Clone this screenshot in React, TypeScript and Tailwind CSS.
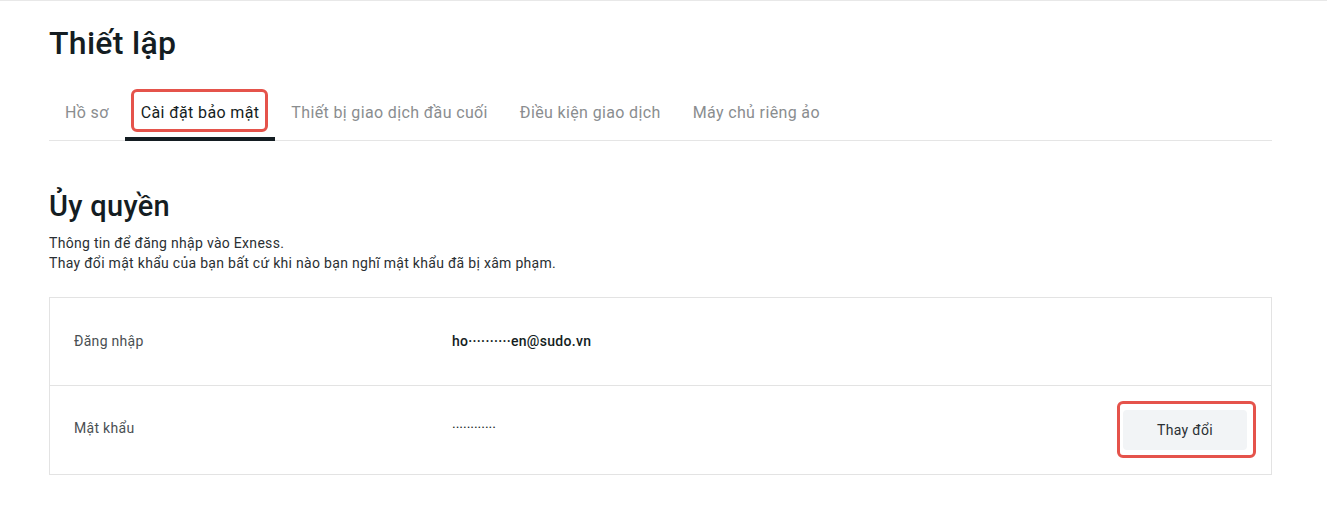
import { ReactNode } from "react";

const tabs = [
  "Hồ sơ",
  "Cài đặt bảo mật",
  "Thiết bị giao dịch đầu cuối",
  "Điều kiện giao dịch",
  "Máy chủ riêng ảo",
];

// red outline drawn over a highlighted control
const Marker = ({ children, className }: { children: ReactNode; className: string }) => (
  <span className="relative inline-flex">
    {children}
    <span
      className={`pointer-events-none absolute rounded-[6px] border-[3px] border-[#e5534b] ${className}`}
    />
  </span>
);

const App = () => {
  const active = 1;

  return (
    <div
      className="min-h-[511px] border-t border-[#e8e8e8] bg-white pl-[49px] pr-[55px] tracking-[0.3px] text-[#141d22]"
      style={{ fontFamily: "Roboto, 'Noto Sans', sans-serif" }}
    >
      <h1 className="mt-[22px] text-[32px] font-medium leading-[40px]">Thiết lập</h1>

      <div className="mt-[38px] flex border-b border-[#e5e5e5]">
        {tabs.map((tab, i) => {
          const isActive = i === active;
          return (
            <div
              key={tab}
              className={`relative px-[16px] pb-[15px] text-[16px] leading-[24px] tracking-[0.36px] ${
                isActive ? "text-[#141d22]" : "text-[#8a8d8f]"
              }`}
            >
              {isActive ? (
                <Marker className="-left-[10px] -right-[9px] -top-[12px] -bottom-[7px]">{tab}</Marker>
              ) : (
                tab
              )}
              {isActive && <span className="absolute -bottom-px left-0 right-0 h-[4px] bg-[#141d22]" />}
            </div>
          );
        })}
      </div>

      <h2 className="mt-[47px] text-[29px] font-medium leading-[36px]">Ủy quyền</h2>
      <p className="mt-[9px] text-[14px] leading-[20px] text-[#2a2f33]">
        Thông tin để đăng nhập vào Exness.
        <br />
        Thay đổi mật khẩu của bạn bất cứ khi nào bạn nghĩ mật khẩu đã bị xâm phạm.
      </p>

      <div className="mt-[24px] border border-[#e3e3e3]">
        <div className="flex h-[88px] items-center border-b border-[#e3e3e3] px-[24px] text-[14px]">
          <div className="w-[378px] text-[#4a4f53]">Đăng nhập</div>
          <div className="font-medium text-[#141d22]">ho··········en@sudo.vn</div>
        </div>
        <div className="flex h-[88px] items-center px-[24px] text-[14px]">
          <div className="w-[378px] -translate-y-[2px] text-[#4a4f53]">Mật khẩu</div>
          <div className="flex-1 -translate-y-[2px] tracking-normal text-[#141d22]">············</div>
          <Marker className="-left-[6px] -right-[9px] -top-[9px] -bottom-[8px]">
            <button className="h-[40px] w-[124px] rounded-[4px] bg-[#f2f4f6] text-[14px] tracking-[0.3px] text-[#2a2f33]">
              Thay đổi
            </button>
          </Marker>
        </div>
      </div>
    </div>
  );
};

export default App;
